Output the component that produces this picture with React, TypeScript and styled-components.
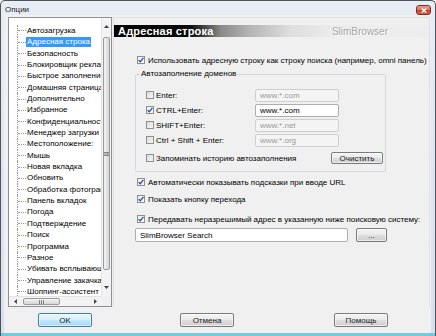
import React from 'react';
import styled, { createGlobalStyle } from 'styled-components';

const GlobalStyle = createGlobalStyle`
  html, body {
    margin: 0;
    padding: 0;
    background: #ffffff;
  }
  body {
    font-family: "Liberation Sans", Arial, sans-serif;
    font-size: 8px;
    color: #000;
  }
`;

const Window = styled.div`
  width: 436px;
  height: 336px;
  box-sizing: border-box;
  display: flex;
  flex-direction: column;
  border: 1px solid #4f545b;
  border-bottom: none;
  border-radius: 5px 5px 0 0;
  overflow: hidden;
  background: linear-gradient(
    #e6edf5 0%,
    #d6e1ed calc(100% - 3px),
    #6fcbdd calc(100% - 3px)
  );
`;

const TitleBar = styled.div`
  height: 14px;
  flex: none;
  display: flex;
  align-items: flex-end;
  justify-content: space-between;
  padding: 0 4px;
`;

const Title = styled.span`
  font-size: 8px;
  line-height: 10px;
  color: #1e1e1e;
`;

const CloseButton = styled.div`
  width: 15px;
  height: 10px;
  box-sizing: border-box;
  border: 1px solid #7a2f26;
  border-radius: 3px;
  background: linear-gradient(#eaa493 0%, #d9715c 48%, #c3412b 52%, #d9644a 100%);
  display: flex;
  align-items: center;
  justify-content: center;
`;

const Client = styled.div`
  flex: 1;
  margin: 0 4px 3px 3px;
  padding: 2px 1px 0 4px;
  background: #f0f0f0;
  display: flex;
  flex-direction: column;
  min-height: 0;
`;

const Main = styled.div`
  height: 290px;
  flex: none;
  display: flex;
`;

/* ---------- tree ---------- */

const TreeBox = styled.div`
  width: 104px;
  box-sizing: border-box;
  border: 1px solid #8d9097;
  background: #fff;
  display: grid;
  grid-template-columns: 1fr 10px;
  grid-template-rows: 1fr 10px;
  overflow: hidden;
`;

const TreeList = styled.div`
  overflow: hidden;
  padding: 7.3px 0 0 8px;
  display: flex;
  flex-direction: column;
`;

const TreeRow = styled.div`
  height: 11.35px;
  flex: none;
  display: flex;
  align-items: stretch;
  white-space: nowrap;
`;

const Connector = styled.span`
  width: 8px;
  flex: none;
  border-left: 1px dotted #9a9a9a;
  display: flex;
  align-items: center;

  &::after {
    content: '';
    width: 100%;
    border-top: 1px dotted #9a9a9a;
  }
`;

const TreeLabel = styled.span<{ $selected?: boolean }>`
  align-self: center;
  line-height: 10px;
  padding: 0 1px;
  font-size: 8px;
  color: ${(p) => (p.$selected ? '#fff' : '#000')};
  background: ${(p) => (p.$selected ? '#3399ff' : 'transparent')};
`;

const VScroll = styled.div`
  background: #f3f3f3;
  border-left: 1px solid #e4e4e4;
  display: flex;
  flex-direction: column;
`;

const HScroll = styled.div`
  background: #f3f3f3;
  border-top: 1px solid #e4e4e4;
  display: flex;
  align-items: stretch;
`;

const Corner = styled.div`
  background: #f0f0f0;
`;

const ArrowBox = styled.div<{ $size: string; $vertical?: boolean }>`
  flex: none;
  ${(p) => (p.$vertical ? `height: ${p.$size};` : `width: ${p.$size};`)}
  display: flex;
  align-items: center;
  justify-content: center;
`;

const Track = styled.div<{ $vertical?: boolean }>`
  flex: 1;
  display: flex;
  flex-direction: ${(p) => (p.$vertical ? 'column' : 'row')};
`;

const Thumb = styled.div<{ $vertical?: boolean; $len: number }>`
  flex: none;
  box-sizing: border-box;
  ${(p) =>
    p.$vertical
      ? `height: ${p.$len}px; margin: 2px 1px 0 1px;
         background: linear-gradient(to right, #f4f4f4, #e4e4e4 50%, #d6d6d6);`
      : `width: ${p.$len}px; margin: 1px 0 1px 2px;
         background: linear-gradient(#f4f4f4, #e4e4e4 50%, #d6d6d6);`}
  border: 1px solid #9b9b9b;
  border-radius: 2px;
  display: flex;
  align-items: center;
  justify-content: center;
`;

const TrackFill = styled.div`
  flex: 1;
`;

/* ---------- right side ---------- */

const RightPanel = styled.div`
  flex: 1;
  margin-left: 1px;
  border: 1px solid #e0e0e0;
  border-bottom: none;
  padding-top: 7px;
  display: flex;
  flex-direction: column;
`;

const Header = styled.div`
  height: 12px;
  flex: none;
  display: flex;
  align-items: center;
  justify-content: space-between;
  padding: 0 41px 0 4px;
  background: linear-gradient(
    to right,
    #000 0%,
    #0a0a0a 24%,
    #3a3a3a 28%,
    #8a8a8a 34%,
    #b4b4b4 43%,
    #dedede 56%,
    #ececec 70%,
    #eeeeee 100%
  );
`;

const HeaderTitle = styled.span`
  font-size: 11px;
  font-weight: bold;
  color: #fff;
  letter-spacing: 0.2px;
`;

const HeaderBrand = styled.span`
  font-size: 10px;
  color: #a6a6a6;
  text-shadow: 1px 1px 0 #ffffff;
`;

const Body = styled.div`
  display: flex;
  flex-direction: column;
  padding-left: 21px;
`;

const CheckRow = styled.label<{ $mt: number }>`
  height: 11px;
  margin-top: ${(p) => p.$mt}px;
  padding-left: 2px;
  display: flex;
  align-items: center;
  gap: 3px;
  white-space: nowrap;
`;

const Box = styled.span<{ $checked?: boolean }>`
  width: 8px;
  height: 8px;
  flex: none;
  box-sizing: border-box;
  border: 1px solid #8f8f8f;
  background: ${(p) =>
    p.$checked
      ? 'linear-gradient(135deg, #e9eef6, #f8f9fc)'
      : 'linear-gradient(135deg, #dcdcdc, #f6f6f6)'};
  display: flex;
  align-items: center;
  justify-content: center;
`;

const Group = styled.fieldset`
  margin: 3.5px 0 0 0;
  padding: 0;
  width: 251px;
  box-sizing: border-box;
  border: 1px solid #d3d8dc;
  border-radius: 2px;
`;

const Legend = styled.legend`
  margin-left: 4px;
  padding: 0 1px;
  font-size: 8px;
  line-height: 10px;
`;

const GroupRows = styled.div`
  display: flex;
  flex-direction: column;
  gap: 2px;
  padding: 9.5px 2px 7px 10px;
`;

const KeyRow = styled.div`
  height: 13px;
  display: grid;
  grid-template-columns: 109px 84px;
  align-items: center;
`;

const KeyLabel = styled.label`
  display: flex;
  align-items: center;
  gap: 2px;
  white-space: nowrap;
`;

const TextInput = styled.div<{ $disabled?: boolean; $width: number; $height: number }>`
  width: ${(p) => p.$width}px;
  height: ${(p) => p.$height}px;
  box-sizing: border-box;
  border: 1px solid ${(p) => (p.$disabled ? '#cfcfcf' : '#abadb3')};
  background: ${(p) => (p.$disabled ? '#f4f4f4' : '#fff')};
  color: ${(p) => (p.$disabled ? '#9a9a9a' : '#000')};
  border-radius: 2px;
  padding-left: 4px;
  display: flex;
  align-items: center;
  white-space: nowrap;
  overflow: hidden;
`;

const HistoryRow = styled.div`
  height: 12px;
  margin-top: 3.5px;
  display: flex;
  align-items: center;
  justify-content: space-between;
`;

const Button = styled.div<{ $width: number; $height: number; $default?: boolean; $ml?: number }>`
  width: ${(p) => p.$width}px;
  height: ${(p) => p.$height}px;
  margin-left: ${(p) => p.$ml ?? 0}px;
  flex: none;
  box-sizing: border-box;
  border: 1px solid ${(p) => (p.$default ? '#3c7fb1' : '#7b7b7b')};
  border-radius: 2px;
  background: ${(p) =>
    p.$default
      ? 'linear-gradient(#e8f5fc 0%, #d9f0fc 45%, #bee6fd 55%, #a7d9f5 100%)'
      : 'linear-gradient(#f3f3f3 0%, #ebebeb 45%, #dddddd 55%, #cfcfcf 100%)'};
  box-shadow: inset 0 0 0 1px rgba(255, 255, 255, 0.6);
  display: flex;
  align-items: center;
  justify-content: center;
  font-size: 8px;
  color: #1a1a1a;
`;

const SearchRow = styled.div`
  margin-top: 3.5px;
  display: flex;
  align-items: center;
  gap: 8px;
`;

const Footer = styled.div`
  flex: 1;
  display: flex;
  align-items: flex-start;
  padding: 6px 0 0 30px;
`;

/* ---------- small drawings ---------- */

const Check = () => (
  <svg width="6" height="6" viewBox="0 0 6 6">
    <path d="M0.6 3.1 L2.3 4.8 L5.4 0.9" fill="none" stroke="#2c4a8c" strokeWidth="1.3" />
  </svg>
);

const Tri = ({ dir }: { dir: 'up' | 'down' | 'left' | 'right' }) => {
  const pts = {
    up: '0,3.5 3,0 6,3.5',
    down: '0,0 3,3.5 6,0',
    left: '3.5,0 0,3 3.5,6',
    right: '0,0 3.5,3 0,6',
  }[dir];
  const vertical = dir === 'up' || dir === 'down';
  return (
    <svg width={vertical ? 5 : 3} height={vertical ? 3 : 5} viewBox={vertical ? '0 0 6 3.5' : '0 0 3.5 6'}>
      <polygon points={pts} fill="#404040" />
    </svg>
  );
};

const Grip = ({ vertical }: { vertical?: boolean }) =>
  vertical ? (
    <svg width="5" height="4" viewBox="0 0 5 4">
      <path d="M0 0.5 H5 M0 2 H5 M0 3.5 H5" stroke="#6b6b6b" strokeWidth="0.8" />
    </svg>
  ) : (
    <svg width="5" height="4" viewBox="0 0 5 4">
      <path d="M0.5 0 V4 M2.5 0 V4 M4.5 0 V4" stroke="#6b6b6b" strokeWidth="0.8" />
    </svg>
  );

const CloseX = () => (
  <svg width="6" height="5" viewBox="0 0 6 5">
    <path d="M0.8 0.5 L5.2 4.5 M5.2 0.5 L0.8 4.5" stroke="#fff" strokeWidth="1.4" />
  </svg>
);

const treeItems = [
  'Автозагрузка',
  'Адресная строка',
  'Безопасность',
  'Блокировщик рекламы',
  'Быстрое заполнение',
  'Домашняя страница',
  'Дополнительно',
  'Избранное',
  'Конфиденциальность',
  'Менеджер загрузки',
  'Местоположение:',
  'Мышь',
  'Новая вкладка',
  'Обновить',
  'Обработка фотографий',
  'Панель вкладок',
  'Погода',
  'Подтверждение',
  'Поиск',
  'Программа',
  'Разное',
  'Убивать всплывающие',
  'Управление закачками',
  'Шоппинг-ассистент',
];

const domainRows = [
  { key: 'Enter:', value: 'www.*.com', checked: false },
  { key: 'CTRL+Enter:', value: 'www.*.com', checked: true },
  { key: 'SHIFT+Enter:', value: 'www.*.net', checked: false },
  { key: 'Ctrl + Shift + Enter:', value: 'www.*.org', checked: false },
];

export default function App() {
  return (
    <>
      <GlobalStyle />
      <Window>
        <TitleBar>
          <Title>Опции</Title>
          <CloseButton>
            <CloseX />
          </CloseButton>
        </TitleBar>

        <Client>
          <Main>
            <TreeBox>
              <TreeList>
                {treeItems.map((item) => (
                  <TreeRow key={item}>
                    <Connector />
                    <TreeLabel $selected={item === 'Адресная строка'}>{item}</TreeLabel>
                  </TreeRow>
                ))}
              </TreeList>
              <VScroll>
                <ArrowBox $size="17px" $vertical>
                  <Tri dir="up" />
                </ArrowBox>
                <Track $vertical>
                  <Thumb $vertical $len={233}>
                    <Grip vertical />
                  </Thumb>
                  <TrackFill />
                </Track>
                <ArrowBox $size="17px" $vertical>
                  <Tri dir="down" />
                </ArrowBox>
              </VScroll>
              <HScroll>
                <ArrowBox $size="12px">
                  <Tri dir="left" />
                </ArrowBox>
                <Track>
                  <Thumb $len={37}>
                    <Grip />
                  </Thumb>
                  <TrackFill />
                </Track>
                <ArrowBox $size="12px">
                  <Tri dir="right" />
                </ArrowBox>
              </HScroll>
              <Corner />
            </TreeBox>

            <RightPanel>
              <Header>
                <HeaderTitle>Адресная строка</HeaderTitle>
                <HeaderBrand>SlimBrowser</HeaderBrand>
              </Header>

              <Body>
                <CheckRow $mt={17.5}>
                  <Box $checked>
                    <Check />
                  </Box>
                  Использовать адресную строку как строку поиска (например, omni панель)
                </CheckRow>

                <Group>
                  <Legend>Автозаполнение доменов</Legend>
                  <GroupRows>
                    {domainRows.map((row) => (
                      <KeyRow key={row.key}>
                        <KeyLabel>
                          <Box $checked={row.checked}>{row.checked && <Check />}</Box>
                          {row.key}
                        </KeyLabel>
                        <TextInput $disabled={!row.checked} $width={84} $height={13}>
                          {row.value}
                        </TextInput>
                      </KeyRow>
                    ))}
                    <HistoryRow>
                      <KeyLabel>
                        <Box />
                        Запоминать историю автозаполнения
                      </KeyLabel>
                      <Button $width={52} $height={12}>
                        Очистить
                      </Button>
                    </HistoryRow>
                  </GroupRows>
                </Group>

                <CheckRow $mt={4.5}>
                  <Box $checked>
                    <Check />
                  </Box>
                  Автоматически показывать подсказки при вводе URL
                </CheckRow>
                <CheckRow $mt={6}>
                  <Box $checked>
                    <Check />
                  </Box>
                  Показать кнопку перехода
                </CheckRow>
                <CheckRow $mt={9}>
                  <Box $checked>
                    <Check />
                  </Box>
                  Передавать неразрешимый адрес в указанную ниже поисковую систему:
                </CheckRow>

                <SearchRow>
                  <TextInput $width={213} $height={14}>
                    SlimBrowser Search
                  </TextInput>
                  <Button $width={31} $height={14}>
                    ...
                  </Button>
                </SearchRow>
              </Body>
            </RightPanel>
          </Main>

          <Footer>
            <Button $width={54} $height={14} $default>
              OK
            </Button>
            <Button $width={54} $height={14} $ml={88}>
              Отмена
            </Button>
            <Button $width={54} $height={14} $ml={100}>
              Помощь
            </Button>
          </Footer>
        </Client>
      </Window>
    </>
  );
}
